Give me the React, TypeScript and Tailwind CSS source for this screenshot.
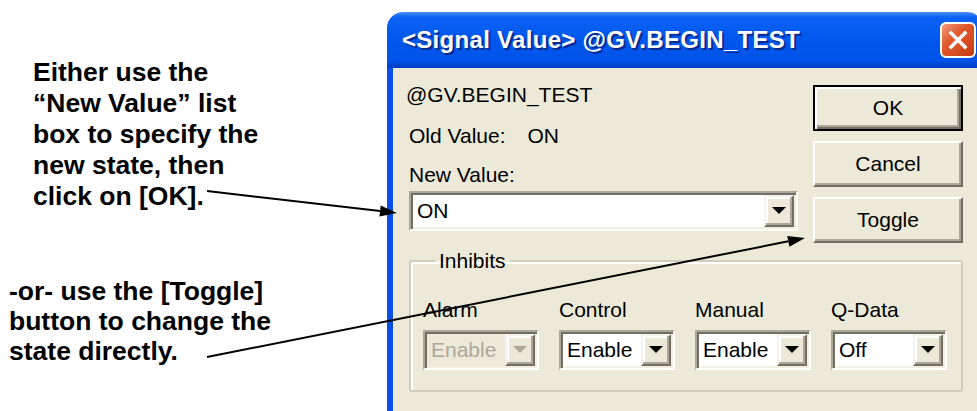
import React from "react"

interface ComboProps {
  value: string
  disabled?: boolean
  className?: string
}

function DropArrow({ disabled }: { disabled?: boolean }) {
  return (
    <div className="w-[30px] h-full shrink-0 flex items-center justify-center bg-[#ece9d8] border-2 border-t-[#f4f3ee] border-l-[#f4f3ee] border-r-[#716f64] border-b-[#716f64] shadow-[inset_-2px_-2px_0_#aca899,inset_2px_2px_0_#ffffff]">
      <svg width="14" height="8" viewBox="0 0 14 8">
        <polygon points="0,0 14,0 7,7" fill={disabled ? "#aca899" : "#000000"} />
      </svg>
    </div>
  )
}

function Combo({ value, disabled, className }: ComboProps) {
  return (
    <div
      className={`flex h-[40px] p-[2px] border-2 border-t-[#aca899] border-l-[#aca899] border-r-white border-b-white shadow-[inset_2px_2px_0_#716f64,inset_-2px_-2px_0_#f1efe2] ${
        disabled ? "bg-[#ece9d8]" : "bg-white"
      } ${className ?? ""}`}
    >
      <div className={`flex-1 pl-[4px] leading-[32px] text-[21px] ${disabled ? "text-[#aca899]" : "text-black"}`}>
        {value}
      </div>
      <DropArrow disabled={disabled} />
    </div>
  )
}

function Button({ label, isDefault }: { label: string; isDefault?: boolean }) {
  if (isDefault) {
    return (
      <div className="h-[46px] w-[150px] flex items-center justify-center bg-[#ece9d8] border-2 border-black shadow-[inset_2px_2px_0_#ffffff,inset_-2px_-2px_0_#716f64,inset_-4px_-4px_0_#aca899] text-[21px] text-black">
        {label}
      </div>
    )
  }
  return (
    <div className="h-[46px] w-[150px] flex items-center justify-center bg-[#ece9d8] border-2 border-t-white border-l-white border-r-[#716f64] border-b-[#716f64] shadow-[inset_-2px_-2px_0_#aca899] text-[21px] text-black">
      {label}
    </div>
  )
}

function Arrow({ x1, y1, x2, y2 }: { x1: number; y1: number; x2: number; y2: number }) {
  const dx = x2 - x1
  const dy = y2 - y1
  const len = Math.hypot(dx, dy)
  const ux = dx / len
  const uy = dy / len
  const bx = x2 - ux * 17
  const by = y2 - uy * 17
  const nx = -uy * 5.5
  const ny = ux * 5.5
  return (
    <g>
      <line x1={x1} y1={y1} x2={bx} y2={by} stroke="#000" strokeWidth="2" />
      <polygon points={`${x2},${y2} ${bx + nx},${by + ny} ${bx - nx},${by - ny}`} fill="#000" />
    </g>
  )
}

const inhibits = [
  { label: "Alarm", value: "Enable", disabled: true },
  { label: "Control", value: "Enable" },
  { label: "Manual", value: "Enable" },
  { label: "Q-Data", value: "Off" },
]

export default function App() {
  return (
    <div className="relative w-[977px] h-[411px] overflow-hidden bg-white flex font-['Liberation_Sans',Arial,sans-serif]">
      {/* annotations */}
      <div className="w-[387px] shrink-0 text-[26.5px] font-bold text-black whitespace-nowrap">
        <p className="pt-[57px] pl-[33px] leading-[31px]">
          Either use the
          <br />
          “New Value” list
          <br />
          box to specify the
          <br />
          new state, then
          <br />
          click on [OK].
        </p>
        <p className="mt-[64px] pl-[9px] leading-[30px]">
          -or- use the [Toggle]
          <br />
          button to change the
          <br />
          state directly.
        </p>
      </div>

      {/* dialog */}
      <div className="mt-[12px] w-[596px] shrink-0 flex flex-col">
        <div className="h-[56px] shrink-0 rounded-t-[16px] bg-[linear-gradient(to_bottom,#4a8ff8_0%,#0d62f4_9%,#0058ee_45%,#0053e8_86%,#003ec2_100%)] flex items-center pl-[15px] pr-[7px]">
          <span className="text-white font-bold text-[24px] tracking-[0.3px] [text-shadow:2px_2px_0_#0a2a8e]">
            &lt;Signal Value&gt; @GV.BEGIN_TEST
          </span>
          <div className="ml-auto w-[36px] h-[36px] rounded-[6px] border-2 border-white bg-[linear-gradient(135deg,#f29a78_0%,#e0582c_40%,#c83c14_100%)] flex items-center justify-center">
            <svg width="20" height="20" viewBox="0 0 20 20">
              <path d="M3 3 L17 17 M17 3 L3 17" stroke="#fff" strokeWidth="3.5" strokeLinecap="square" />
            </svg>
          </div>
        </div>

        <div className="flex-1 border-x-[6px] border-[#0b4fe6] bg-[#ece9d8] pt-[15px] pl-[16px] pr-[14px] text-black">
          <div className="flex gap-[15px]">
            <div className="w-[389px] text-[21px] leading-[24px]">
              <div className="h-[24px] -ml-[3px]">@GV.BEGIN_TEST</div>
              <div className="mt-[17px] h-[24px] flex">
                <span>Old Value:</span>
                <span className="ml-[22px]">ON</span>
              </div>
              <div className="mt-[15px] h-[24px]">New Value:</div>
              <Combo value="ON" className="mt-[4px] w-[389px]" />
            </div>
            <div className="w-[150px] pt-[2px] flex flex-col gap-[10px]">
              <Button label="OK" isDefault />
              <Button label="Cancel" />
              <Button label="Toggle" />
            </div>
          </div>

          <fieldset className="mt-[6px] w-[554px] border-2 border-[#d0cdbd] rounded-[3px] shadow-[inset_2px_2px_0_#ffffff] pt-[25px] pl-[12px] pb-[20px]">
            <legend className="ml-[12px] px-[4px] text-[21px] leading-[24px]">Inhibits</legend>
            <div className="grid grid-cols-[116px_116px_116px_116px] gap-x-[20px]">
              {inhibits.map((item) => (
                <div key={item.label}>
                  <div className="h-[24px] text-[21px] leading-[24px]">{item.label}</div>
                  <Combo value={item.value} disabled={item.disabled} className="mt-[8px] w-[116px]" />
                </div>
              ))}
            </div>
          </fieldset>
        </div>
      </div>

      <svg className="absolute inset-0 pointer-events-none" width="977" height="411">
        <Arrow x1={207} y1={191} x2={397} y2={213} />
        <Arrow x1={207} y1={357} x2={805} y2={238} />
      </svg>
    </div>
  )
}
